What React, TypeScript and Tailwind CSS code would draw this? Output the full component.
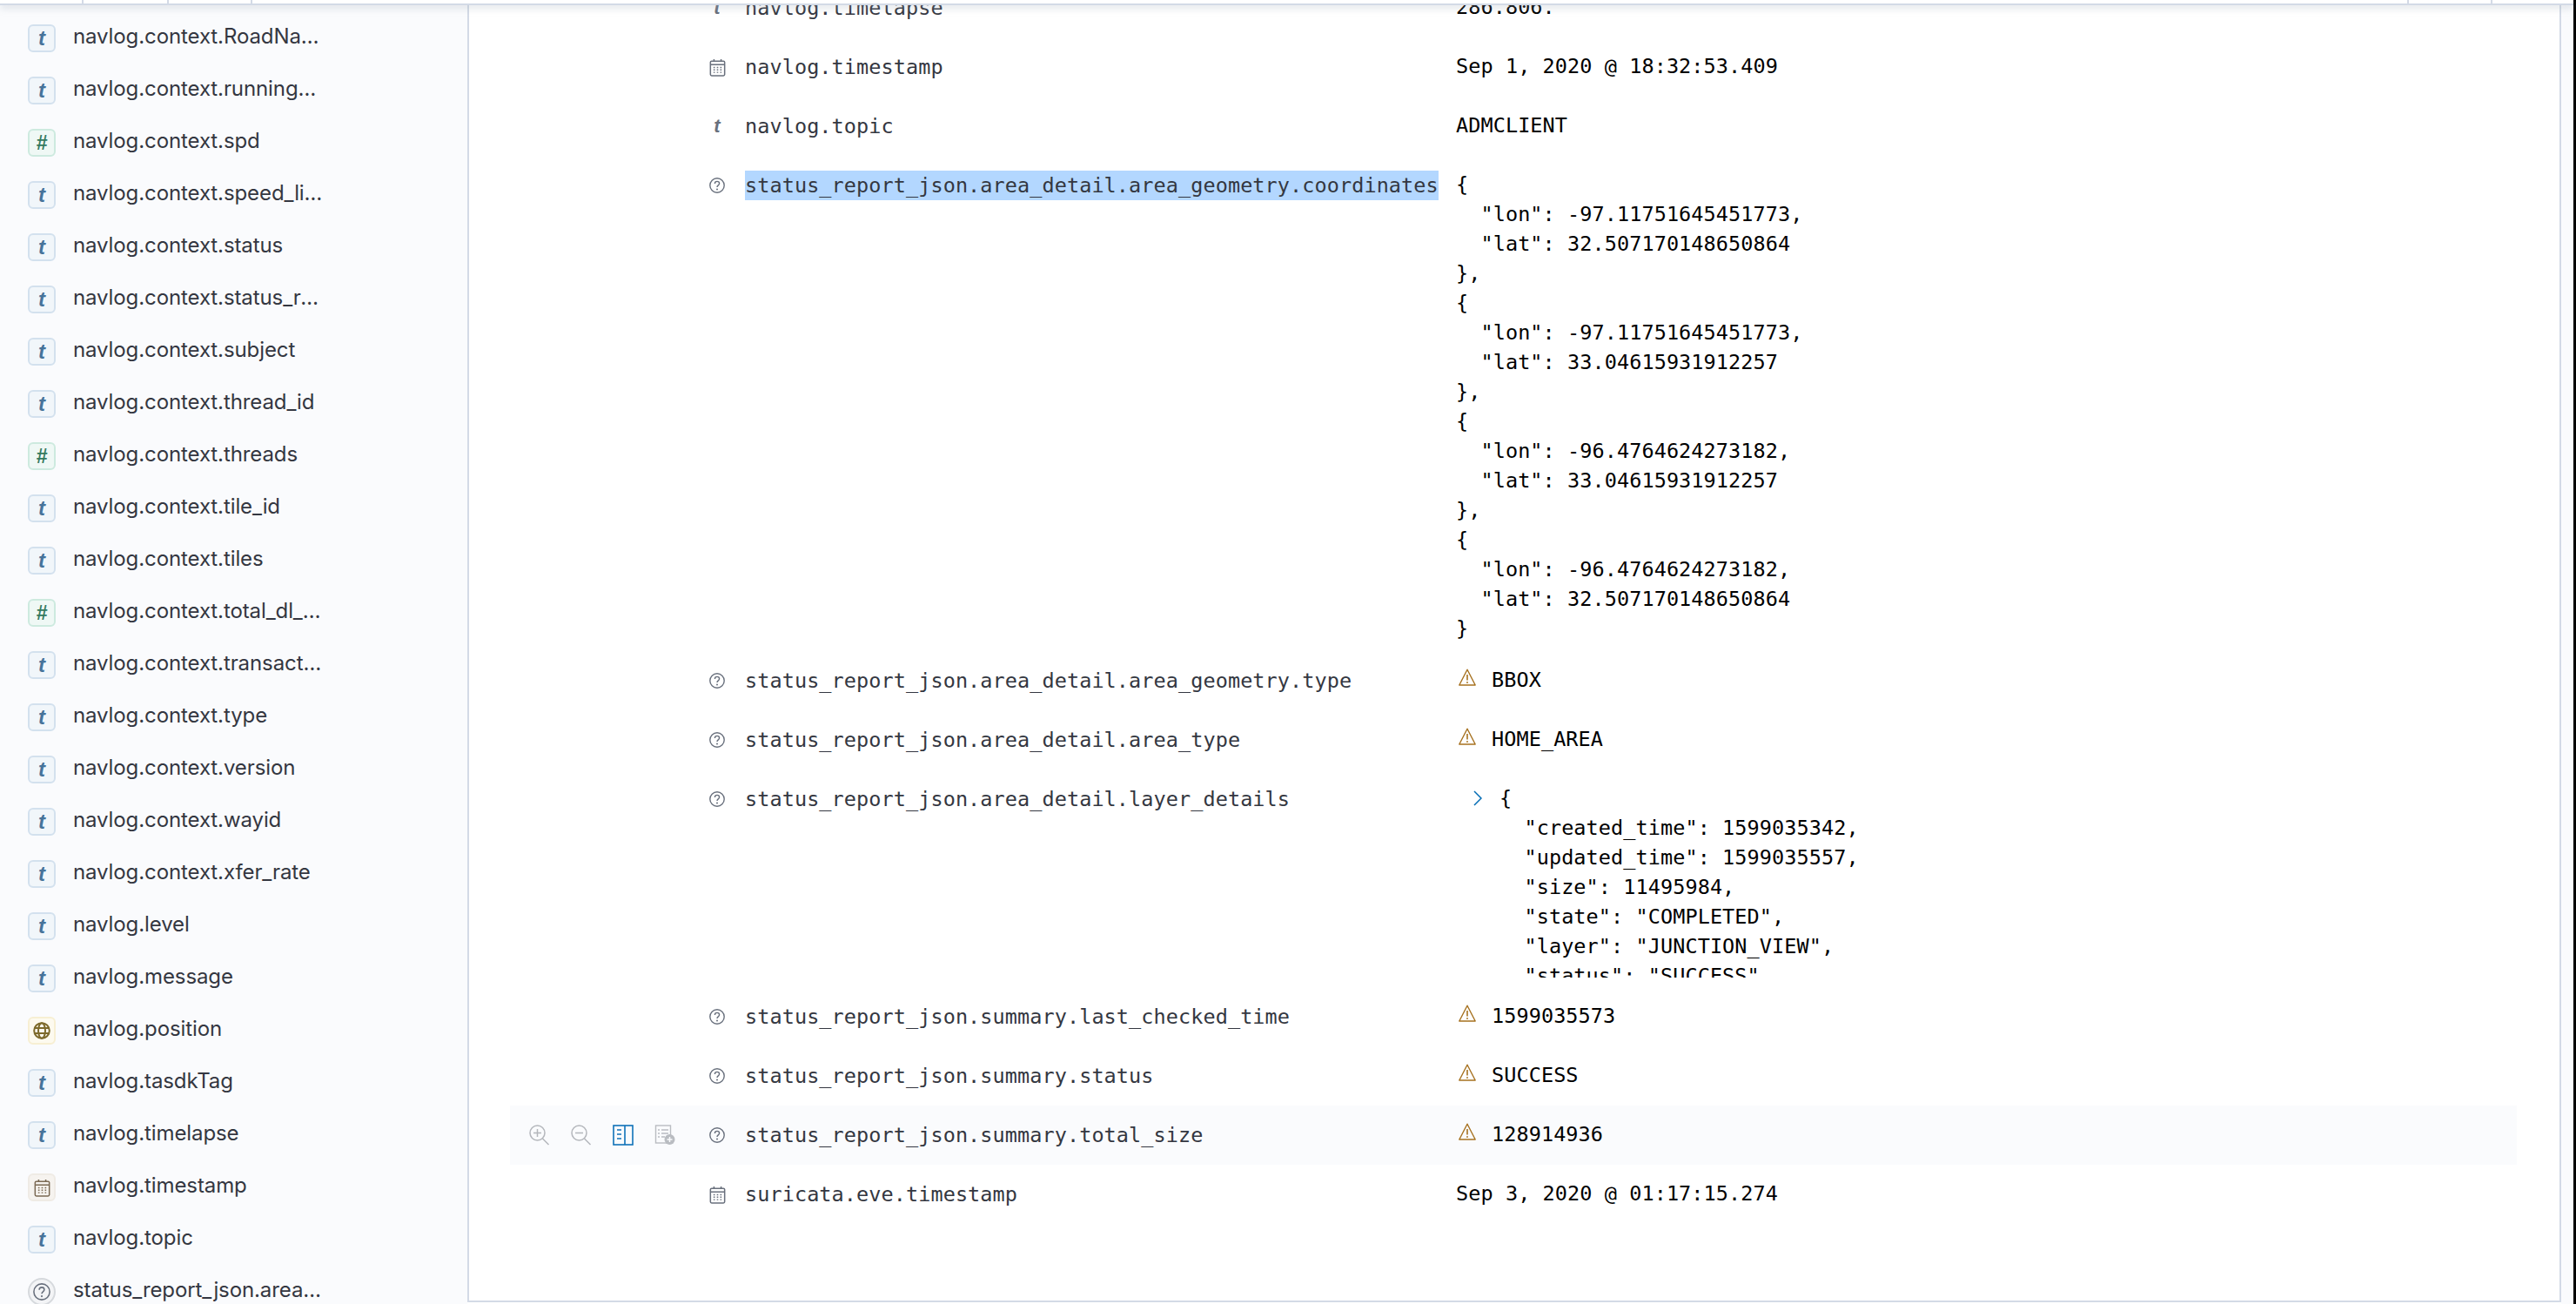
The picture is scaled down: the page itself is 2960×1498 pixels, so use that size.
import React from 'react'

const mono = 'font-["DejaVu_Sans_Mono",monospace] text-[23.5px] tracking-[0.08px] leading-[34px]'

type FieldType = 't' | 'num' | 'geo' | 'date' | 'unknown'

const sidebarFields: { name: string; type: FieldType }[] = [
  { name: 'navlog.context.RoadName', type: 't' },
  { name: 'navlog.context.running_status', type: 't' },
  { name: 'navlog.context.spd', type: 'num' },
  { name: 'navlog.context.speed_limit', type: 't' },
  { name: 'navlog.context.status', type: 't' },
  { name: 'navlog.context.status_report', type: 't' },
  { name: 'navlog.context.subject', type: 't' },
  { name: 'navlog.context.thread_id', type: 't' },
  { name: 'navlog.context.threads', type: 'num' },
  { name: 'navlog.context.tile_id', type: 't' },
  { name: 'navlog.context.tiles', type: 't' },
  { name: 'navlog.context.total_dl_size', type: 'num' },
  { name: 'navlog.context.transaction_id', type: 't' },
  { name: 'navlog.context.type', type: 't' },
  { name: 'navlog.context.version', type: 't' },
  { name: 'navlog.context.wayid', type: 't' },
  { name: 'navlog.context.xfer_rate', type: 't' },
  { name: 'navlog.level', type: 't' },
  { name: 'navlog.message', type: 't' },
  { name: 'navlog.position', type: 'geo' },
  { name: 'navlog.tasdkTag', type: 't' },
  { name: 'navlog.timelapse', type: 't' },
  { name: 'navlog.timestamp', type: 'date' },
  { name: 'navlog.topic', type: 't' },
  { name: 'status_report_json.area_detail', type: 'unknown' },
]

const coordinates = `{
  "lon": -97.11751645451773,
  "lat": 32.507170148650864
},
{
  "lon": -97.11751645451773,
  "lat": 33.04615931912257
},
{
  "lon": -96.4764624273182,
  "lat": 33.04615931912257
},
{
  "lon": -96.4764624273182,
  "lat": 32.507170148650864
}`

// only the lines the scroll box shows
const layerDetails = `{
  "created_time": 1599035342,
  "updated_time": 1599035557,
  "size": 11495984,
  "state": "COMPLETED",
  "layer": "JUNCTION_VIEW",
  "status": "SUCCESS"`

function CalendarIcon({ className }: { className: string }) {
  return (
    <svg viewBox="0 0 16 18" className={className} fill="none" stroke="currentColor" strokeWidth="1.3">
      <rect x="1" y="2.7" width="14" height="14.4" rx="1.2" />
      <path d="M1 6.3h14M4.5 0.8v2.6M11.5 0.8v2.6" />
      <path d="M4 9h1.4M7.3 9h1.4M10.6 9h1.4M4 11.4h1.4M7.3 11.4h1.4M10.6 11.4h1.4M4 13.8h1.4M7.3 13.8h1.4M10.6 13.8h1.4" strokeWidth="1.2" />
    </svg>
  )
}

function QuestionIcon({ className }: { className: string }) {
  return (
    <svg viewBox="0 0 18 18" className={className} fill="none" stroke="currentColor" strokeWidth="1.4">
      <circle cx="9" cy="9" r="8.2" />
      <path d="M6.4 7c0-1.6 1.1-2.6 2.6-2.6s2.6 1 2.6 2.4c0 2-2.6 2.2-2.6 4.2" strokeWidth="1.4" />
      <circle cx="9" cy="13.6" r="1" fill="currentColor" stroke="none" />
    </svg>
  )
}

function WarningIcon() {
  return (
    <svg viewBox="0 0 20 20" className="w-5 h-5 text-[#a6711f] shrink-0" fill="none" stroke="currentColor" strokeWidth="1.4">
      <path d="M10 1.2 L19.2 19 H0.8 Z" strokeLinejoin="round" />
      <path d="M10 7v6.5" strokeWidth="1.6" />
      <circle cx="10" cy="16" r="0.95" fill="currentColor" stroke="none" />
    </svg>
  )
}

function SidebarToken({ type }: { type: FieldType }) {
  if (type === 't') {
    return (
      <span className="w-8 h-8 shrink-0 flex items-center justify-center rounded-md border-2 border-[#d3e1ee] bg-[#f1f6fa] text-[#47739a] italic font-bold text-[24px] font-['Liberation_Sans',sans-serif]">
        t
      </span>
    )
  }
  if (type === 'num') {
    return (
      <span className="w-8 h-8 shrink-0 flex items-center justify-center rounded-md border-2 border-[#cdeadf] bg-[#eff8f5] text-[#357a5f] italic font-bold text-[23px] font-['Liberation_Sans',sans-serif]">
        #
      </span>
    )
  }
  if (type === 'geo') {
    return (
      <span className="w-8 h-8 shrink-0 flex items-center justify-center rounded-md border-2 border-[#f7efd3] bg-[#fdfaef] text-[#7d6a2c]">
        <svg viewBox="0 0 20 20" className="w-5 h-5" fill="none" stroke="currentColor" strokeWidth="2">
          <circle cx="10" cy="10" r="8.8" />
          <ellipse cx="10" cy="10" rx="4" ry="8.8" />
          <path d="M1.5 7h17M1.5 13h17" />
        </svg>
      </span>
    )
  }
  if (type === 'date') {
    return (
      <span className="w-8 h-8 shrink-0 flex items-center justify-center rounded-md border-2 border-[#efebe5] bg-[#f6f3ef] text-[#7b6a54]">
        <CalendarIcon className="w-[19px] h-[21px]" />
      </span>
    )
  }
  return (
    <span className="w-8 h-8 shrink-0 flex items-center justify-center rounded-full border-2 border-[#d6d9dd] bg-[#f3f4f6] text-[#69707d]">
      <QuestionIcon className="w-5 h-5" />
    </span>
  )
}

function RowTypeIcon({ type }: { type: FieldType }) {
  if (type === 't') {
    return <span className="w-[18px] text-center text-[#69707d] italic font-bold text-[22px] leading-[34px] font-['Liberation_Sans',sans-serif]">t</span>
  }
  if (type === 'date') {
    return <CalendarIcon className="w-[19px] h-[21px] text-[#69707d]" />
  }
  return <QuestionIcon className="w-[18px] h-[18px] text-[#69707d]" />
}

function RowActions() {
  return (
    <div className="flex items-center gap-6 pl-[22px]">
      <svg viewBox="0 0 24 24" className="w-6 h-6 text-[#b4b7bc]" fill="none" stroke="currentColor" strokeWidth="1.5">
        <circle cx="9.5" cy="9.5" r="8.5" />
        <path d="M5 9.5h9M9.5 5v9M15.5 16l7 7" />
      </svg>
      <svg viewBox="0 0 24 24" className="w-6 h-6 text-[#b4b7bc]" fill="none" stroke="currentColor" strokeWidth="1.5">
        <circle cx="9.5" cy="9.5" r="8.5" />
        <path d="M5 9.5h9M15.5 16l7 7" />
      </svg>
      <svg viewBox="0 0 24 24" className="w-6 h-6 text-[#0f72b8]" fill="none" stroke="currentColor" strokeWidth="1.6">
        <rect x="1" y="1" width="22" height="22" />
        <path d="M14 1v22M5 6h5M5 11h5M5 16h5" />
      </svg>
      <svg viewBox="0 0 24 24" className="w-6 h-6 text-[#b9bcc1]" fill="none">
        <rect x="1.5" y="1" width="17" height="20" stroke="currentColor" strokeWidth="1.4" />
        <path d="M4 6h2M8 6h8M4 10h2M8 10h8M4 14h2M8 14h4" stroke="currentColor" strokeWidth="1.4" />
        <circle cx="17.5" cy="17" r="6" fill="currentColor" />
        <path d="M14.5 17h6M17.5 14v6" stroke="#fafbfd" strokeWidth="1.5" />
      </svg>
    </div>
  )
}

function DocRow({ type, name, children, hovered, selected }: {
  type: FieldType
  name: string
  children: React.ReactNode
  hovered?: boolean
  selected?: boolean
}) {
  return (
    <div className={`flex items-start min-h-[68px] ${hovered ? 'bg-[#fafbfd]' : ''}`}>
      <div className="w-[229px] h-[68px] flex items-center shrink-0">{hovered && <RowActions />}</div>
      <div className="w-[41px] h-[68px] flex items-center shrink-0">
        <RowTypeIcon type={type} />
      </div>
      <div className={`w-[817px] shrink-0 pt-[17px] text-[#343741] ${mono}`}>
        <span className={selected ? 'inline-block h-[34px] bg-[#b3d7ff]' : ''}>{name}</span>
      </div>
      <div className={`flex-1 min-w-0 pt-[16px] pb-[9px] text-black ${mono}`}>{children}</div>
    </div>
  )
}

function Warned({ value }: { value: string }) {
  return (
    <div className="flex items-center">
      <span className="ml-[3px] mr-[18px] flex -translate-y-[3px]"><WarningIcon /></span>
      <span>{value}</span>
    </div>
  )
}

export default function App() {
  return (
    <div className="relative w-[2960px] h-[1498px] overflow-hidden bg-white flex font-['Inter',sans-serif]">
      {/* top edge of the panel above */}
      <div className="absolute top-0 left-0 w-[2957px] h-[6px] bg-white border-b-2 border-[#d3dae6] shadow-[0_3px_8px_rgba(152,162,179,0.35)] z-10 flex">
        <div className="w-[96px] border-r-2 border-[#d3dae6]" />
        <div className="w-[98px] border-r-2 border-[#d3dae6]" />
        <div className="w-[96px] border-r-2 border-[#d3dae6]" />
        <div className="w-[2478px] border-r-2 border-[#d3dae6]" />
        <div className="w-[96px] border-r-2 border-[#d3dae6]" />
      </div>

      <aside className="w-[537px] h-full shrink-0 overflow-hidden bg-[#fafbfd] pt-[14px]">
        {sidebarFields.map((f) => (
          <div key={f.name} className="h-[60px] flex items-center pl-8">
            <SidebarToken type={f.type} />
            <span className="ml-5 w-[288px] truncate text-[24px] tracking-[-0.1px] leading-[30px] -mt-[5px] text-[#343741]">{f.name}</span>
          </div>
        ))}
      </aside>

      <main className="w-[406px] flex-1 h-[1496px] overflow-hidden border-l-2 border-r-2 border-b-2 border-[#d3dae6] bg-white pl-[47px] pr-[49px]">
        <div className="-mt-[25px]">
          <DocRow type="t" name="navlog.timelapse">286.806.</DocRow>
          <DocRow type="date" name="navlog.timestamp">Sep 1, 2020 @ 18:32:53.409</DocRow>
          <DocRow type="t" name="navlog.topic">ADMCLIENT</DocRow>
          <DocRow type="unknown" name="status_report_json.area_detail.area_geometry.coordinates" selected>
            <pre className="font-[inherit]">{coordinates}</pre>
          </DocRow>
          <DocRow type="unknown" name="status_report_json.area_detail.area_geometry.type"><Warned value="BBOX" /></DocRow>
          <DocRow type="unknown" name="status_report_json.area_detail.area_type"><Warned value="HOME_AREA" /></DocRow>
          <DocRow type="unknown" name="status_report_json.area_detail.layer_details">
            <div className="flex items-start h-[223px] mb-[2px] overflow-hidden">
              <svg viewBox="0 0 10 18" className="w-[10px] h-[18px] mt-[8px] ml-5 mr-5 text-[#006bb4] shrink-0" fill="none" stroke="currentColor" strokeWidth="1.5">
                <path d="M1 1l8 8-8 8" />
              </svg>
              <pre className="font-[inherit]">{layerDetails}</pre>
            </div>
          </DocRow>
          <DocRow type="unknown" name="status_report_json.summary.last_checked_time"><Warned value="1599035573" /></DocRow>
          <DocRow type="unknown" name="status_report_json.summary.status"><Warned value="SUCCESS" /></DocRow>
          <DocRow type="unknown" name="status_report_json.summary.total_size" hovered><Warned value="128914936" /></DocRow>
          <DocRow type="date" name="suricata.eve.timestamp">Sep 3, 2020 @ 01:17:15.274</DocRow>
        </div>
      </main>

      <div className="w-[14px] h-full shrink-0 bg-[#fafbfd]" />
      <div className="w-[3px] h-full shrink-0 bg-black" />
    </div>
  )
}
